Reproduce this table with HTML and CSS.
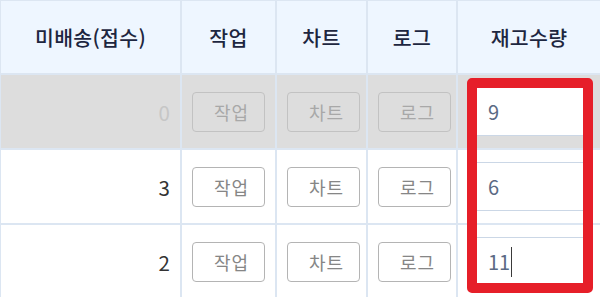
FILE: index.html
```html
<!DOCTYPE html>
<html lang="ko">
<head>
<meta charset="utf-8">
<title>재고 목록</title>
<link rel="stylesheet" href="styles.css">
</head>
<body>
<div class="sheet">
  <div class="grid">
    <div class="hd">미배송(접수)</div>
    <div class="hd">작업</div>
    <div class="hd">차트</div>
    <div class="hd">로그</div>
    <div class="hd">재고수량</div>

    <div class="cell num row-off">0</div>
    <div class="cell row-off"><button class="btn">작업</button></div>
    <div class="cell row-off"><button class="btn">차트</button></div>
    <div class="cell row-off"><button class="btn">로그</button></div>
    <div class="cell row-off"><div class="qty">9</div></div>

    <div class="cell num">3</div>
    <div class="cell"><button class="btn">작업</button></div>
    <div class="cell"><button class="btn">차트</button></div>
    <div class="cell"><button class="btn">로그</button></div>
    <div class="cell"><div class="qty">6</div></div>

    <div class="cell num">2</div>
    <div class="cell"><button class="btn">작업</button></div>
    <div class="cell"><button class="btn">차트</button></div>
    <div class="cell"><button class="btn">로그</button></div>
    <div class="cell"><div class="qty">11<span class="caret"></span></div></div>
  </div>
  <div class="mark"></div>
</div>
</body>
</html>
```
FILE: styles.css
```css
html, body {
  margin: 0;
  padding: 0;
  background: #ffffff;
  overflow: hidden;
}

body {
  width: 600px;
  height: 297px;
  font-family: "Noto Sans CJK KR", "Noto Sans", sans-serif;
}

.sheet {
  position: relative;
  width: 600px;
  height: 297px;
  overflow: hidden;
}

.grid {
  display: grid;
  grid-template-columns: 179px 93px 89px 88px 1fr;
  grid-template-rows: 72px 73px 73px 73px;
  gap: 2px;
  background: #dce6f2;
  padding: 1px 0 0 1px;
  width: 600px;
  box-sizing: border-box;
}

.hd {
  background: #eef6ff;
  color: #1d2640;
  font-size: 20.5px;
  font-weight: 500;
  display: flex;
  align-items: center;
  justify-content: center;
  letter-spacing: 0.3px;
}

.cell {
  background: #ffffff;
  display: flex;
  align-items: center;
  padding-left: 10px;
}

.cell.row-off {
  background: #dddddd;
}

.num {
  justify-content: flex-end;
  padding: 0 10px 0 0;
  font-size: 20.5px;
  color: #333333;
}

.num.row-off {
  color: #c6c6c6;
}

.btn {
  width: 73px;
  height: 40px;
  box-sizing: border-box;
  border: 1px solid #b4b4b4;
  border-radius: 4px;
  background: transparent;
  font-family: inherit;
  font-size: 18px;
  color: #868686;
  padding: 0 0 0 6px;
  letter-spacing: 1px;
}

.row-off .btn {
  border-color: #c2c2c2;
  color: #a8a8a8;
}

.qty {
  width: 122px;
  height: 49px;
  box-sizing: border-box;
  border: 1px solid #cbd7e6;
  background: #ffffff;
  display: flex;
  align-items: center;
  padding-left: 19px;
  font-size: 20px;
  color: #5b6a84;
}

.caret {
  display: inline-block;
  width: 1px;
  height: 30px;
  background: #3a3a3a;
  margin-left: 1px;
}

.mark {
  position: absolute;
  left: 467px;
  top: 78px;
  width: 126px;
  height: 215px;
  box-sizing: border-box;
  border: 10px solid #e61f29;
  border-radius: 5px;
}
```
